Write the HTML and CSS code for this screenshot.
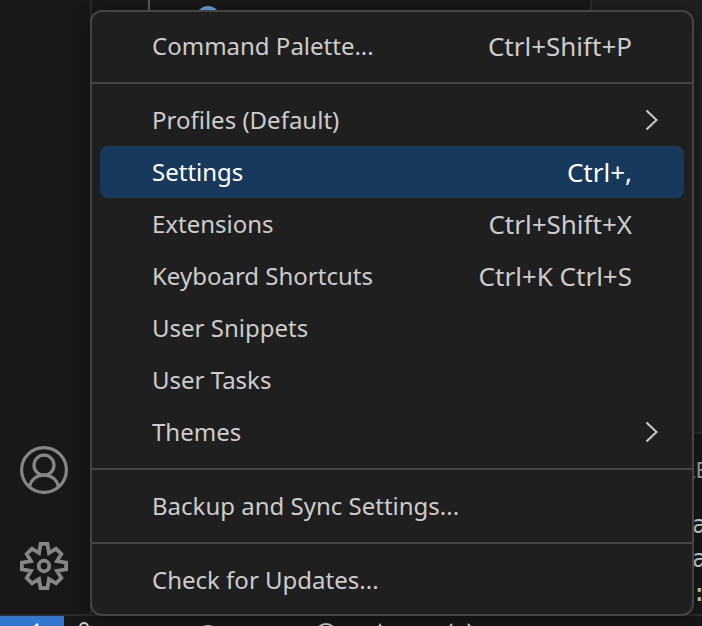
FILE: index.html
```html
<!DOCTYPE html>
<html lang="en">
<head>
<meta charset="utf-8">
<title>Editor</title>
<link rel="stylesheet" href="styles.css">
</head>
<body>
<div class="workbench">
  <div class="main">
    <nav class="activity" aria-label="Activity bar">
      <button class="action" type="button" aria-label="Accounts">
        <svg viewBox="0 0 48 48" fill="none" stroke="currentColor" stroke-width="3.200"><circle cx="24" cy="24" r="22.4"/><circle cx="24" cy="19.200" r="10"/><path d="M9.500 41C11 33.500 16.500 29.200 24 29.200s13 4.300 14.500 11.800"/></svg>
      </button>
      <button class="action" type="button" aria-label="Manage" aria-expanded="true">
        <svg viewBox="0 0 48 48" fill="none" stroke="currentColor" stroke-width="3.800"><path d="M20.600 1.900L27.400 1.900 29 11 36 6.700 41.300 12 37 19 46.100 20.600 46.100 27.400 37 29 41.300 36 36 41.300 29 37 27.400 46.100 20.600 46.100 19 37 12 41.300 6.700 36 11 29 1.900 27.400 1.900 20.600 11 19 6.700 12 12 6.700 19 11z"/><circle cx="24" cy="24" r="5.300"/></svg>
      </button>
    </nav>
    <aside class="sidebar">
      <span class="guide"></span>
      <span class="file-icon"></span>
    </aside>
    <div class="column">
      <main class="editor"></main>
      <section class="panel">
        <span class="tab">LE</span>
        <div class="terminal">a<br>a<br>:</div>
      </section>
    </div>
  </div>
  <footer class="status">
    <button class="remote" type="button" aria-label="Remote window">
      <svg viewBox="0 0 32 32" fill="none" stroke="currentColor" stroke-width="2.500"><path d="M22 8l-8 7 8 7M5 13l8 7-8 7"/></svg>
    </button>
    <svg class="branch" viewBox="0 0 32 32" fill="none" stroke="currentColor" stroke-width="2"><circle cx="10" cy="11" r="4"/><circle cx="10" cy="27" r="4"/><path d="M10 15v8"/></svg>
    <svg class="sync" viewBox="0 0 32 32" fill="none" stroke="currentColor" stroke-width="2"><circle cx="16" cy="20" r="10"/></svg>
    <svg class="errors" viewBox="0 0 32 32" fill="none" stroke="currentColor" stroke-width="2"><circle cx="16" cy="18" r="10"/></svg>
    <svg class="warnings" viewBox="0 0 32 32" fill="none" stroke="currentColor" stroke-width="2"><path d="M16 9L5 28h22z"/></svg>
    <svg class="ports" viewBox="0 0 32 32" fill="none" stroke="currentColor" stroke-width="2"><path d="M8 8q-7 8 0 16M24 8q7 8 0 16"/></svg>
  </footer>
  <div class="menu" role="menu" aria-label="Manage">
    <button class="item" type="button" role="menuitem"><span>Command Palette...</span><span class="keys">Ctrl+Shift+P</span></button>
    <hr class="separator">
    <button class="item" type="button" role="menuitem"><span>Profiles (Default)</span><svg class="chevron" viewBox="0 0 14 22" fill="none" stroke="currentColor" stroke-width="2"><path d="M1.500 1.500L11.500 11l-10 9.500"/></svg></button>
    <button class="item selected" type="button" role="menuitem"><span>Settings</span><span class="keys">Ctrl+,</span></button>
    <button class="item" type="button" role="menuitem"><span>Extensions</span><span class="keys">Ctrl+Shift+X</span></button>
    <button class="item" type="button" role="menuitem"><span>Keyboard Shortcuts</span><span class="keys">Ctrl+K Ctrl+S</span></button>
    <button class="item" type="button" role="menuitem"><span>User Snippets</span></button>
    <button class="item" type="button" role="menuitem"><span>User Tasks</span></button>
    <button class="item" type="button" role="menuitem"><span>Themes</span><svg class="chevron" viewBox="0 0 14 22" fill="none" stroke="currentColor" stroke-width="2"><path d="M1.500 1.500L11.500 11l-10 9.500"/></svg></button>
    <hr class="separator">
    <button class="item" type="button" role="menuitem"><span>Backup and Sync Settings...</span></button>
    <hr class="separator">
    <button class="item" type="button" role="menuitem"><span>Check for Updates...</span></button>
  </div>
</div>
</body>
</html>
```
FILE: styles.css
```css
* {
  box-sizing: border-box;
}

body {
  margin: 0;
  background: #181818;
  color: #cccccc;
  font-family: "Segoe UI", "Noto Sans", sans-serif;
  font-size: 24px;
}

button {
  border: 0;
  background: none;
  color: inherit;
  font: inherit;
}

svg {
  display: block;
}

.workbench {
  position: relative;
  display: flex;
  flex-direction: column;
  height: 100vh;
  overflow: hidden;
}

.main {
  display: flex;
  flex: 1;
  min-height: 0;
}

.activity {
  display: flex;
  flex: 0 0 92px;
  flex-direction: column;
  justify-content: flex-end;
  border-right: 2px solid #2b2b2b;
  color: #868686;
}

.action {
  height: 96px;
  padding: 0 0 0 20px;
}

.action svg {
  width: 48px;
  height: 48px;
}

.sidebar {
  display: flex;
  flex: 0 0 500px;
  align-items: flex-start;
  gap: 46px;
  padding-left: 56px;
  border-right: 2px solid #2b2b2b;
}

.guide {
  width: 2px;
  height: 24px;
  background: #585858;
}

.file-icon {
  width: 24px;
  height: 24px;
  margin-top: 6px;
  border-radius: 50%;
  background: #5a9fe4;
}

.column {
  display: flex;
  flex: 1;
  flex-direction: column;
  min-width: 0;
}

.editor {
  flex: 1;
  background: #1f1f1f;
}

.panel {
  flex: 0 0 182px;
  padding: 20px 0 0 92px;
  border-top: 2px solid #2b2b2b;
  overflow: hidden;
}

.tab {
  display: block;
  color: #9d9d9d;
  font-size: 22px;
  line-height: 30px;
}

.terminal {
  margin-top: 24px;
  padding-left: 8px;
  font-family: "DejaVu Sans Mono", monospace;
  font-size: 24px;
  line-height: 34px;
}

.status {
  display: flex;
  flex: 0 0 12px;
  align-items: flex-start;
  border-top: 2px solid #2b2b2b;
  overflow: hidden;
}

.status svg {
  flex: none;
  width: 32px;
  height: 32px;
}

.remote {
  display: flex;
  flex: 0 0 64px;
  align-items: flex-start;
  height: 44px;
  padding: 0 0 0 16px;
  background: #3477d1;
  color: #ffffff;
}

.branch {
  margin-left: 10px;
}

.sync {
  margin-left: 86px;
}

.errors {
  margin-left: 86px;
}

.warnings {
  margin-left: 22px;
}

.ports {
  margin-left: 48px;
}

.menu {
  position: absolute;
  top: 10px;
  right: 8px;
  left: 90px;
  padding: 8px;
  border: 2px solid #454545;
  border-radius: 12px;
  background: #1f1f1f;
  box-shadow: 0 4px 16px rgba(0, 0, 0, 0.36);
}

.item {
  display: flex;
  align-items: center;
  justify-content: space-between;
  width: 100%;
  height: 52px;
  padding: 0 52px;
  border-radius: 8px;
  line-height: 52px;
  white-space: nowrap;
}

.keys {
  font-size: 26px;
}

.selected {
  background: #17395d;
  color: #ffffff;
}

.chevron {
  width: 14px;
  height: 22px;
  margin-right: -27px;
}

.separator {
  height: 2px;
  margin: 10px -8px;
  border: 0;
  background: #454545;
}
```
